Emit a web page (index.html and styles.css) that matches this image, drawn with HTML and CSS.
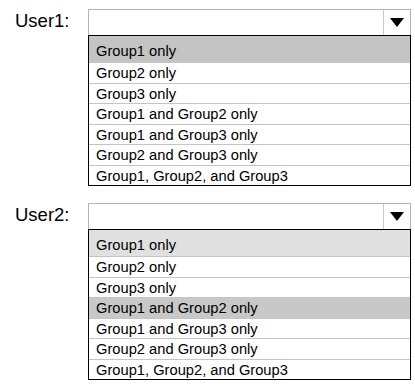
FILE: index.html
```html
<!DOCTYPE html>
<html lang="en">
<head>
  <meta charset="UTF-8">
  <title>User groups</title>
  <link rel="stylesheet" href="styles.css">
</head>
<body>
  <div class="question">
    <div class="row">
      <div class="label">User1:</div>
      <div class="dropdown">
        <div class="select">
          <span class="value"></span>
          <span class="button"><span class="arrow"></span></span>
        </div>
        <ul class="options">
          <li class="head dark">Group1 only</li>
          <li>Group2 only</li>
          <li>Group3 only</li>
          <li>Group1 and Group2 only</li>
          <li>Group1 and Group3 only</li>
          <li>Group2 and Group3 only</li>
          <li>Group1, Group2, and Group3</li>
        </ul>
      </div>
    </div>

    <div class="row">
      <div class="label">User2:</div>
      <div class="dropdown">
        <div class="select">
          <span class="value"></span>
          <span class="button"><span class="arrow"></span></span>
        </div>
        <ul class="options">
          <li class="head">Group1 only</li>
          <li>Group2 only</li>
          <li>Group3 only</li>
          <li class="picked">Group1 and Group2 only</li>
          <li>Group1 and Group3 only</li>
          <li>Group2 and Group3 only</li>
          <li>Group1, Group2, and Group3</li>
        </ul>
      </div>
    </div>
  </div>
</body>
</html>
```

FILE: styles.css
```css
* {
  box-sizing: border-box;
}

body {
  margin: 0;
  background: #fff;
  font-family: 'Liberation Sans', Arial, sans-serif;
  color: #000;
}

.question {
  display: flex;
  flex-direction: column;
  gap: 17px;
  padding-top: 9px;
}

.row {
  display: grid;
  grid-template-columns: 88px 323px;
}

.label {
  padding-left: 15px;
  padding-top: 1px;
  font-size: 18.5px;
}

.select {
  display: flex;
  height: 26px;
  border: 1px solid #b4b4b4;
  border-bottom: none;
}

.value {
  flex: 1;
}

.button {
  width: 27px;
  border-left: 1px solid #c8c8c8;
  display: flex;
  align-items: center;
  justify-content: center;
}

.arrow {
  width: 0;
  height: 0;
  border-left: 7px solid transparent;
  border-right: 7px solid transparent;
  border-top: 9px solid #000;
}

.options {
  list-style: none;
  margin: 0;
  padding: 0;
  border: 1px solid #000;
  font-size: 14.7px;
}

.options li {
  height: 20.5px;
  line-height: 20px;
  padding-left: 7px;
  border-top: 1px solid #c4c4c4;
}

.options li.head {
  height: 26px;
  padding-top: 5px;
  border-top: none;
  background: #e0e0e0;
}

.options li.dark {
  background: #c4c4c4;
}

.options li.picked {
  background: #c8c8c8;
}
```
